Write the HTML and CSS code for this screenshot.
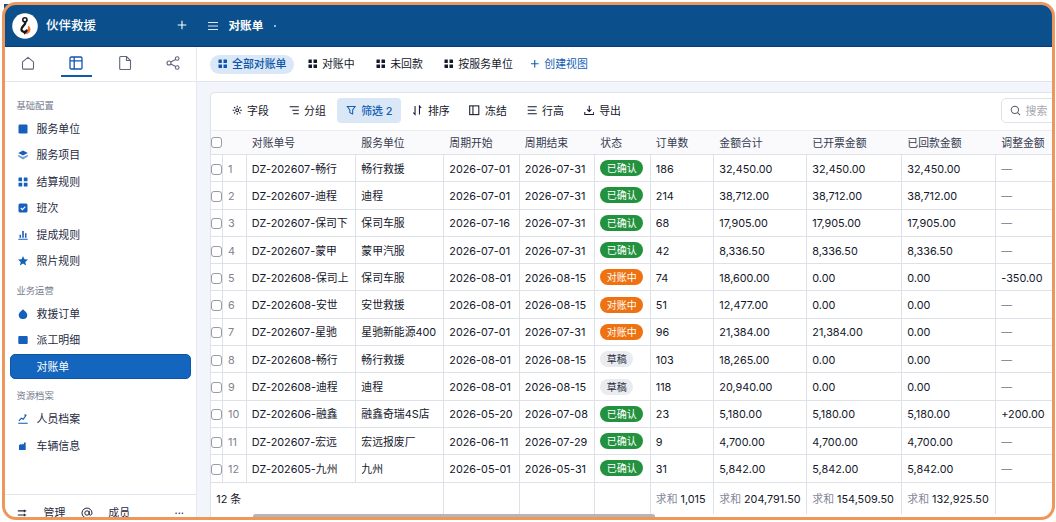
FILE: index.html
```
<!DOCTYPE html>
<html lang="zh-CN">
<head>
  <meta charset="UTF-8" />
  <title>对账单 - 伙伴救援</title>
  <meta name="viewport" content="width=device-width, initial-scale=1.0" />
  <link rel="stylesheet" href="styles.css">
</head>

<body>
  <svg width="0" height="0" class="sprite">
    <symbol id="i-grid" viewBox="0 0 10 10"><path fill="currentColor" d="M.5 1a.5.5 0 0 1 .5-.5h3v3.700H.5zM5.800.5H9a.5.5 0 0 1 .5.5v3.200H5.800zM.5 5.800h3.700v3.700H1a.5.5 0 0 1-.5-.5zM5.800 5.800h3.700V9a.5.5 0 0 1-.5.5H5.800z"/></symbol>
  </svg>

  <div class="app">
    <header class="topbar">
      <div class="brand">
        <span class="logo">
          <svg viewBox="0 0 26 26" width="26" height="26" fill="none">
            <circle cx="13" cy="13" r="12.800" fill="#fff"/>
            <path d="M16 12.800c3 1.200 3.200 4.700 1 7-.9.9-1.800 1.300-2.600 1.400l-1-2.800c1.800-.6 3-2.500 2.600-5.600z" fill="#f0702c"/>
            <circle cx="12.900" cy="6.800" r="2.100" stroke="#15171c" stroke-width="1.600"/>
            <path d="M13.400 9c.8 2.700-4 4.200-4 7.300 0 2.600 3.700 3.400 5.200 1.200" stroke="#15171c" stroke-width="2.200" stroke-linecap="round"/>
            <path d="M10.500 18.500l5-.6-2.700 3.900z" fill="#15171c"/>
          </svg>
        </span>
        <span class="brand-name">伙伴救援</span>
        <svg class="plus" viewBox="0 0 10 10" width="10" height="10" stroke="#fff" stroke-width="1.100"><path d="M5 .7v8.600M.7 5h8.600"/></svg>
      </div>
      <div class="crumb">
        <svg viewBox="0 0 10 10" width="10" height="10" stroke="#dce8f5" stroke-width="1.100"><path d="M0 1.500h10M0 5h10M0 8.500h10"/></svg>
        <span class="crumb-name">对账单</span>
        <span class="dot"></span>
      </div>
    </header>

    <div class="body">
      <aside class="sidebar">
        <nav class="modes">
          <span class="mode"><svg viewBox="0 0 16 16" width="16" height="16"><path d="M2.500 6.900L8 2.400l5.500 4.500v6a1.200 1.200 0 0 1-1.200 1.200H3.700a1.200 1.200 0 0 1-1.200-1.200z"/></svg></span>
          <span class="mode active"><svg viewBox="0 0 16 16" width="16" height="16"><rect x="2" y="2" width="12" height="12" rx="1.200"/><path d="M2 5.800h12M6.200 2v12"/></svg></span>
          <span class="mode"><svg viewBox="0 0 16 16" width="16" height="16"><path d="M3.700 1.500h5.800l4 4v8a1 1 0 0 1-1 1H3.700a1 1 0 0 1-1-1v-11a1 1 0 0 1 1-1zM9.500 1.500v4h4"/></svg></span>
          <span class="mode"><svg viewBox="0 0 16 16" width="16" height="16"><circle cx="4" cy="8" r="2"/><circle cx="12.200" cy="3.500" r="1.800"/><circle cx="12.200" cy="12.500" r="1.800"/><path d="M5.800 7l4.800-2.600M5.800 9l4.800 2.600"/></svg></span>
        </nav>

        <div class="menu">
          <div class="group">基础配置</div>
          <div class="item"><svg viewBox="0 0 10 10"><rect x=".5" y=".5" width="9" height="9" rx="1.300"/></svg>服务单位</div>
          <div class="item"><svg viewBox="0 0 10 10"><path d="M5 .5l4.800 2.600L5 5.600.200 3.100z"/><path opacity=".6" d="M.2 4.700L5 7.100l4.800-2.400v1.800L5 9.400.2 6.500z"/></svg>服务项目</div>
          <div class="item"><svg><use href="#i-grid"/></svg>结算规则</div>
          <div class="item"><svg viewBox="0 0 10 10"><rect x=".5" y=".5" width="9" height="9" rx="1.500"/><path d="M2.800 5l1.600 1.600 2.900-3" fill="none" stroke="#fff" stroke-width="1.100"/></svg>班次</div>
          <div class="item"><svg viewBox="0 0 10 10"><path d="M1.500 4.800H3v3H1.500zM4.200 1h1.600v6.800H4.200zM7 3.200h1.500v4.600H7zM.3 8.700h9.400v1H.3z"/></svg>提成规则</div>
          <div class="item"><svg viewBox="0 0 10 10"><path d="M5 0l1.400 3.300 3.600.3-2.700 2.300.8 3.600L5 7.600 1.900 9.500l.8-3.600L0 3.600l3.600-.3z"/></svg>照片规则</div>

          <div class="group">业务运营</div>
          <div class="item"><svg viewBox="0 0 10 10"><path d="M5 0c.8 1.700 4.300 3.300 4.300 6A4.200 4.200 0 0 1 5 10 4.200 4.200 0 0 1 .7 6C.7 3.300 4.200 1.700 5 0z"/></svg>救援订单</div>
          <div class="item"><svg viewBox="0 0 10 10"><rect x=".3" y="1" width="9.400" height="8" rx="1"/></svg>派工明细</div>
          <div class="item active"><svg viewBox="0 0 10 10"></svg>对账单</div>

          <div class="group">资源档案</div>
          <div class="item"><svg viewBox="0 0 10 10"><path d="M1 6.800l2.300-2.600 1.900 1L8.300 1M.3 9.200h9.400M6.200 1h2.200" fill="none" stroke="#0f56b3" stroke-width="1.100"/></svg>人员档案</div>
          <div class="item"><svg viewBox="0 0 10 10"><path d="M1 9V4.300l1.800-1.500v1.200l1.800-1.500v1.200L6 2.700V1.500h1.700V9z"/></svg>车辆信息</div>
        </div>

        <div class="side-foot">
          <svg viewBox="0 0 12 12" width="10" height="10" fill="none" stroke="#23283c" stroke-width="1.300"><path d="M1 3.500h10M1 8.500h10M8.800 2v3M8.800 7v3"/></svg>
          <span class="foot-manage">管理</span>
          <svg viewBox="0 0 12 12" width="12" height="12" fill="none" stroke="#23283c" stroke-width="1"><circle cx="6" cy="6" r="2.200"/><path d="M8.200 3.800v3.300c0 1.600 2.800 1.600 2.800-1.100a5 5 0 1 0-2.200 4.200"/></svg>
          <span class="foot-member">成员</span>
          <span class="foot-more">···</span>
        </div>
      </aside>

      <main class="main">
        <div class="views">
          <span class="view active"><svg><use href="#i-grid"/></svg>全部对账单</span>
          <span class="view"><svg><use href="#i-grid"/></svg>对账中</span>
          <span class="view"><svg><use href="#i-grid"/></svg>未回款</span>
          <span class="view"><svg><use href="#i-grid"/></svg>按服务单位</span>
          <span class="view create"><svg viewBox="0 0 10 10" stroke="currentColor" stroke-width="1.200"><path d="M5 1v8M1 5h8"/></svg>创建视图</span>
        </div>

        <section class="card">
          <div class="toolbar">
            <span class="tool"><svg viewBox="0 0 12 12"><circle cx="6" cy="6" r="1.700"/><path d="M6 .8v1.900M6 9.300v1.900M.8 6h1.900M9.300 6h1.900M2.300 2.300l1.400 1.400M8.300 8.300l1.400 1.400M2.300 9.700l1.400-1.400M8.300 3.700l1.400-1.400"/></svg>字段</span>
            <span class="tool"><svg viewBox="0 0 12 12"><path d="M.8 2h10.400M3.800 6h7.400M4.800 10h6.400"/></svg>分组</span>
            <span class="tool active"><svg viewBox="0 0 12 12"><path d="M1.500 1.800h9L7.600 5.700v4.500l-3.200-1.500v-3z"/></svg>筛选 2</span>
            <span class="tool"><svg viewBox="0 0 12 12"><path d="M3.500 1.200v9.600L1.500 8.600M8.500 10.800V1.200l2 2.200"/></svg>排序</span>
            <span class="tool"><svg viewBox="0 0 12 12"><rect x=".8" y="1" width="10.400" height="10"/><path d="M4.500 1v10"/></svg>冻结</span>
            <span class="tool"><svg viewBox="0 0 12 12"><path d="M.8 2h10.400M.8 6h9M.8 10h10.400"/></svg>行高</span>
            <span class="tool"><svg viewBox="0 0 12 12"><path d="M6 .8v6.400M3.500 5L6 7.500 8.500 5M.9 8v2.800h10.200V8"/></svg>导出</span>
            <span class="search"><svg viewBox="0 0 12 12" width="11" height="11"><circle cx="5.300" cy="5.300" r="4"/><path d="M8.300 8.300l2.700 2.700"/></svg>搜索</span>
          </div>

          <div class="grid" id="grid"></div>
          <div class="scroll"><div class="thumb"></div></div>
        </section>
      </main>
    </div>
  </div>

  <script src="script.js"></script>
</body>
</html>
```
FILE: styles.css
```
*,
*::after {
  box-sizing: border-box;
}

body {
  margin: 0;
  padding: 4px;
  height: 522px;
  overflow: hidden;
  background: #fff;
  color: #14182b;
  font-family: Inter, 'Noto Sans CJK SC', sans-serif;
  font-size: 10.900px;
  line-height: 16px;
  white-space: nowrap;
}

svg {
  flex: none;
  display: block;
}

.sprite {
  position: absolute;
}

.app {
  width: 1049px;
  height: 514px;
  border-radius: 0 12px 12px 12px;
  overflow: hidden;
  display: flex;
  flex-direction: column;
}

/* rounded outline over the whole window */
.app::after {
  content: '';
  position: absolute;
  left: 2px;
  top: 2px;
  width: 1053px;
  height: 518px;
  border: 3px solid #ee975c;
  border-radius: 14px;
  pointer-events: none;
}

/* top bar */
.topbar {
  flex: none;
  height: 43px;
  display: flex;
  align-items: center;
  background: #0b508d;
  border-bottom: 1px solid #073c78;
  color: #fff;
}

.brand {
  width: 192px;
  padding: 2px 9px 0 8px;
  display: flex;
  align-items: center;
}

.brand-name {
  margin-left: 8px;
  font-size: 12.500px;
  font-weight: 500;
}

.plus {
  margin-left: auto;
  margin-bottom: 2px;
}

.crumb {
  padding: 2px 0 0 12px;
  display: flex;
  align-items: center;
}

.crumb-name {
  margin: 0 11px 0 10.500px;
  font-size: 11.600px;
  font-weight: 600;
}

.dot {
  width: 2px;
  height: 2px;
  border-radius: 1px;
  background: #c9dcf0;
}

.body {
  flex: 1;
  min-height: 0;
  display: flex;
}

/* sidebar */
.sidebar {
  flex: none;
  width: 193px;
  border-right: 1px solid #e6e8f0;
  display: flex;
  flex-direction: column;
}

.modes {
  flex: none;
  height: 35px;
  padding: 0 0 4px 8.500px;
  border-bottom: 1px solid #e3e6ee;
  display: flex;
  gap: 17.400px;
}

.mode {
  width: 31px;
  padding-top: 1px;
  display: flex;
  align-items: center;
  justify-content: center;
}

.mode svg {
  fill: none;
  stroke: #60657c;
  stroke-width: 1.100;
}

.mode.active {
  border-bottom: 2px solid #0b5cab;
  padding-top: 3px;
}

.mode.active svg {
  stroke: #0f56b3;
  stroke-width: 1.300;
}

.menu {
  flex: 1;
  padding: 8px 5px 0 6px;
}

.group {
  height: 26px;
  padding: 7.500px 0 0 6.500px;
  font-size: 9.300px;
  color: #767b8f;
}

.item {
  height: 25px;
  margin-bottom: 1.500px;
  padding-left: 7.500px;
  border-radius: 5px;
  display: flex;
  align-items: center;
  gap: 9px;
  color: #262b3f;
}

.item svg {
  width: 10px;
  height: 10px;
  fill: #1460bb;
  color: #1460bb;
}

.item.active {
  background: #1465bd;
  border: 1px solid #0d56aa;
  padding-left: 6.500px;
  color: #fff;
}

.side-foot {
  flex: none;
  height: 24px;
  padding: 2px 12px 0 13px;
  border-top: 1px solid #e3e6ee;
  display: flex;
  align-items: center;
  color: #262b3f;
}

.side-foot svg {
  margin-top: 10px;
}

.side-foot span {
  margin-top: 10px;
}

.foot-manage {
  margin: 0 15.500px 0 16.500px;
}

.foot-member {
  margin-left: 15.500px;
}

.foot-more {
  margin-left: auto;
}

/* main area */
.main {
  flex: 1;
  min-width: 0;
  background: #f3f5fc;
  display: flex;
  flex-direction: column;
}

.views {
  flex: none;
  height: 35px;
  padding: 0 0 0 13px;
  background: #fff;
  border-bottom: 1px solid #e0e3ee;
  display: flex;
  align-items: center;
}

.view {
  height: 19px;
  padding: 0 13.500px 0 8px;
  border-radius: 10px;
  display: flex;
  align-items: center;
  gap: 4.500px;
}

.view svg {
  width: 9.500px;
  height: 9.500px;
}

.view.active {
  padding: 0 8px;
  margin-right: 5.500px;
  background: #d9e7f6;
  color: #0d55a8;
  font-weight: 500;
}

.view.create {
  margin-left: -4px;
  color: #1260b5;
}

.card {
  flex: 1;
  min-height: 0;
  margin: 10px 0 0 13px;
  border: 1px solid #dfe2ea;
  border-right: 0;
  border-bottom: 0;
  border-radius: 5px 0 0 0;
  background: #fff;
  overflow: hidden;
}

.toolbar {
  height: 37px;
  padding: 0 0 2px 11.500px;
  display: flex;
  align-items: center;
  gap: 2.800px;
}

.tool {
  flex: none;
  height: 25px;
  padding: 0 8px 0 9px;
  border-radius: 4px;
  display: flex;
  align-items: center;
  gap: 5px;
}

.tool svg {
  width: 10.500px;
  height: 10.500px;
  fill: none;
  stroke: currentColor;
  stroke-width: 1.200;
}

.tool.active {
  background: #d9e7f6;
  color: #1260b5;
  font-weight: 500;
}

.search {
  flex: none;
  width: 70px;
  height: 25px;
  margin-left: 368.800px;
  padding-left: 8px;
  border: 1px solid #dfe1e8;
  border-radius: 5px;
  display: flex;
  align-items: center;
  gap: 5px;
  color: #a6a9b1;
}

.search svg {
  fill: none;
  stroke: #555a6b;
  stroke-width: 1.100;
}

/* table */
.grid {
  font-size: 10.850px;
}

.row {
  width: 880px;
  height: 27.300px;
  display: grid;
  grid-template-columns: 11.500px 24px 109.500px 88px 75.500px 75.500px 55.500px 63.500px 93px 95px 94px 90px;
  border-bottom: 1px solid #dfe1e8;
}

.row > div {
  padding: 1px 0 0 5.300px;
  border-right: 1px solid #dfe1e8;
  display: flex;
  align-items: center;
  font-weight: 440;
}

.row .check {
  padding: 2px 0 0;
}

.row .num {
  padding-left: 5.500px;
  color: #80838e;
  font-weight: 400;
}

.row .dash {
  color: #6f7485;
}

.row.head {
  height: 25px;
  border-top: 1px solid #ebedf2;
  background: #fafafc;
}

.head > div {
  padding-top: 0;
  border-right-color: transparent;
  color: #363b50;
  font-weight: 400;
}

.head .check {
  padding-top: 0;
}

.box {
  flex: none;
  width: 11px;
  height: 11px;
  border: 1px solid #999ca6;
  border-radius: 3px;
  background: #fff;
}

.tag {
  height: 16px;
  margin-top: -1px;
  padding: 0 6.500px;
  border-radius: 8px;
  font-size: 10px;
  line-height: 16px;
  color: #fff;
}

.tag.ok {
  background: #23923f;
}

.tag.doing {
  background: #ee7211;
}

.tag.draft {
  background: #e9ebef;
  color: #262b3f;
}

.row.total {
  height: 31px;
  border-bottom: 0;
}

.total .count {
  grid-column: span 4;
}

.total em {
  margin-right: 3px;
  font-style: normal;
  font-weight: 400;
  color: #84889a;
}

.scroll {
  padding-left: 42px;
}

.thumb {
  width: 402px;
  height: 5px;
  border-radius: 3px;
  background: #b5b5b6;
}
```
FILE: script.js
```
const columns = ['对账单号', '服务单位', '周期开始', '周期结束', '状态', '订单数', '金额合计', '已开票金额', '已回款金额', '调整金额'];

const rows = [
  ['DZ-202607-畅行', '畅行救援', '2026-07-01', '2026-07-31', '已确认', '186', '32,450.00', '32,450.00', '32,450.00', '—'],
  ['DZ-202607-迪程', '迪程', '2026-07-01', '2026-07-31', '已确认', '214', '38,712.00', '38,712.00', '38,712.00', '—'],
  ['DZ-202607-保司下', '保司车服', '2026-07-16', '2026-07-31', '已确认', '68', '17,905.00', '17,905.00', '17,905.00', '—'],
  ['DZ-202607-蒙甲', '蒙甲汽服', '2026-07-01', '2026-07-31', '已确认', '42', '8,336.50', '8,336.50', '8,336.50', '—'],
  ['DZ-202608-保司上', '保司车服', '2026-08-01', '2026-08-15', '对账中', '74', '18,600.00', '0.00', '0.00', '-350.00'],
  ['DZ-202608-安世', '安世救援', '2026-08-01', '2026-08-15', '对账中', '51', '12,477.00', '0.00', '0.00', '—'],
  ['DZ-202607-星驰', '星驰新能源400', '2026-07-01', '2026-07-31', '对账中', '96', '21,384.00', '21,384.00', '0.00', '—'],
  ['DZ-202608-畅行', '畅行救援', '2026-08-01', '2026-08-15', '草稿', '103', '18,265.00', '0.00', '0.00', '—'],
  ['DZ-202608-迪程', '迪程', '2026-08-01', '2026-08-15', '草稿', '118', '20,940.00', '0.00', '0.00', '—'],
  ['DZ-202606-融鑫', '融鑫奇瑞4S店', '2026-05-20', '2026-07-08', '已确认', '23', '5,180.00', '5,180.00', '5,180.00', '+200.00'],
  ['DZ-202607-宏远', '宏远报废厂', '2026-06-11', '2026-07-29', '已确认', '9', '4,700.00', '4,700.00', '4,700.00', '—'],
  ['DZ-202605-九州', '九州', '2026-05-01', '2026-05-31', '已确认', '31', '5,842.00', '5,842.00', '5,842.00', '—']
];

const tagClass = { '已确认': 'ok', '对账中': 'doing', '草稿': 'draft' };

function cell(value) {
  if (tagClass[value]) return `<div><span class="tag ${tagClass[value]}">${value}</span></div>`;
  if (value === '—') return '<div class="dash">—</div>';
  return `<div>${value}</div>`;
}

const check = '<div class="check"><span class="box"></span></div>';

let html = `<div class="row head">${check}<div></div>${columns.map(c => `<div>${c}</div>`).join('')}</div>`;

rows.forEach((row, i) => {
  html += `<div class="row">${check}<div class="num">${i + 1}</div>${row.map(cell).join('')}</div>`;
});

const sums = ['1,015', '204,791.50', '154,509.50', '132,925.50'];
html += `<div class="row total"><div class="count">12 条</div><div></div><div></div><div></div>${sums.map(s => `<div><em>求和</em>${s}</div>`).join('')}<div></div></div>`;

document.getElementById('grid').innerHTML = html;
```
